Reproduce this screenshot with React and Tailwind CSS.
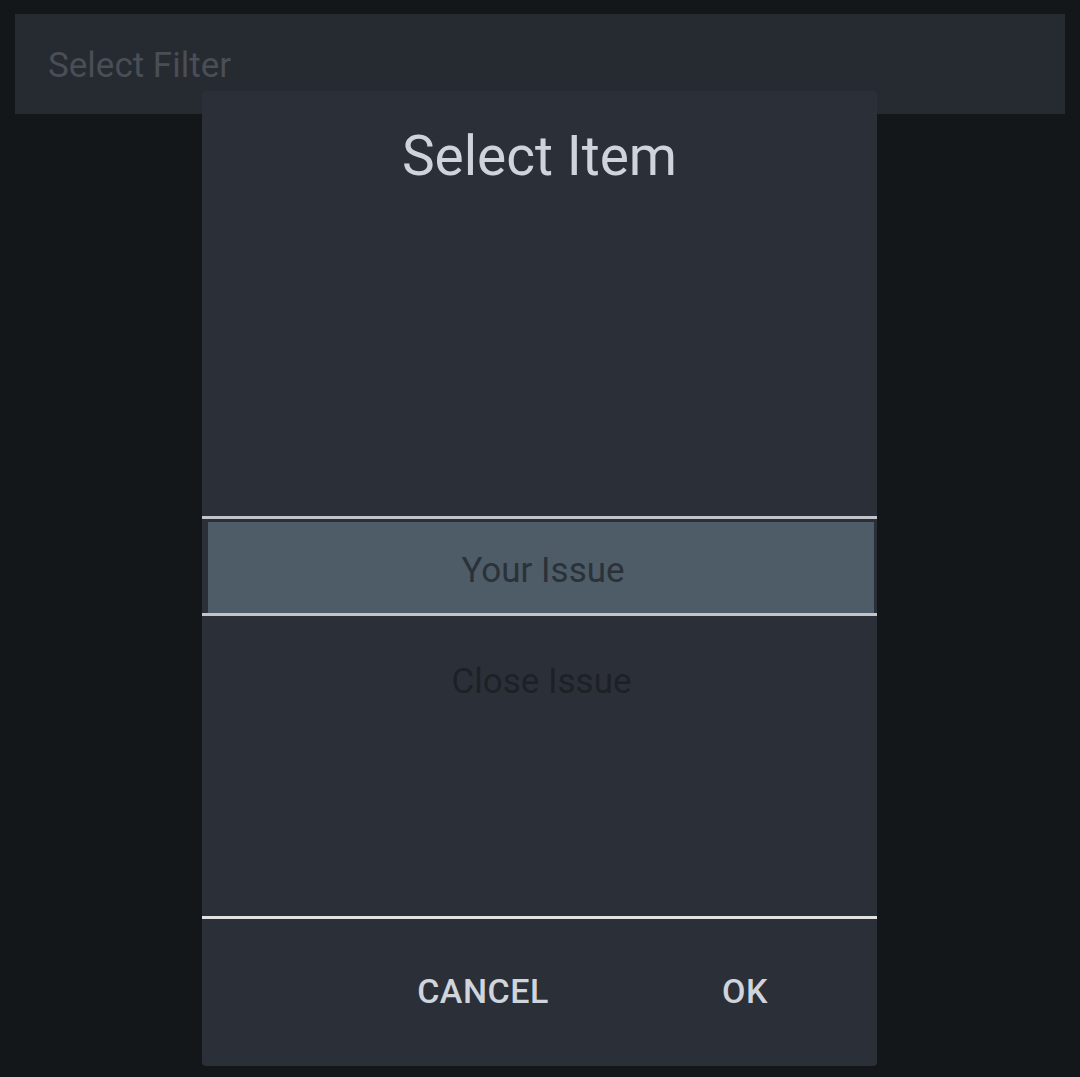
export default function App() {
  const font = { fontFamily: "Roboto, 'Noto Sans', sans-serif" };
  return (
    <div className="relative w-[1080px] h-[1077px] bg-[#14171a] overflow-hidden" style={font}>
      <div className="pt-[14px] px-[15px]">
        <div className="h-[100px] bg-[#262a31] flex items-center pl-[33px]">
          <span className="text-[35px] text-[#4a4e55] leading-none mt-[2px]">Select Filter</span>
        </div>
      </div>

      <div className="absolute left-[202px] top-[91px] w-[675px] h-[975px] bg-[#2b3038] rounded-[4px] flex flex-col">
        <div className="h-[130px] flex items-center justify-center">
          <span className="text-[55px] text-[#cfd3dc] leading-none">Select Item</span>
        </div>
        <div className="h-[295px]" />
        <div className="h-[3px] bg-[#c1c5c9]" />
        <div className="h-[3px]" />
        <div className="h-[91px] ml-[6px] mr-[3px] bg-[#4e5c68] flex items-center justify-center">
          <span className="text-[35px] text-[#2b3139] leading-none mt-[6px] ml-[4px]">Your Issue</span>
        </div>
        <div className="h-[3px] bg-[#c1c5c9]" />
        <div className="h-[300px] flex justify-center pt-[48px]">
          <span className="text-[35px] text-[#1d2126] leading-none h-[35px] ml-[4px]">Close Issue</span>
        </div>
        <div className="h-[3px] bg-[#e2e2e2]" />
        <div className="flex-1 flex items-center pl-[181px] gap-[62px] pb-[2px]">
          <div className="w-[200px] text-center text-[34px] font-medium text-[#d0d4dc] tracking-[0.5px]">CANCEL</div>
          <div className="w-[200px] text-center text-[34px] font-medium text-[#d0d4dc] tracking-[0.5px]">OK</div>
        </div>
      </div>
    </div>
  );
}
